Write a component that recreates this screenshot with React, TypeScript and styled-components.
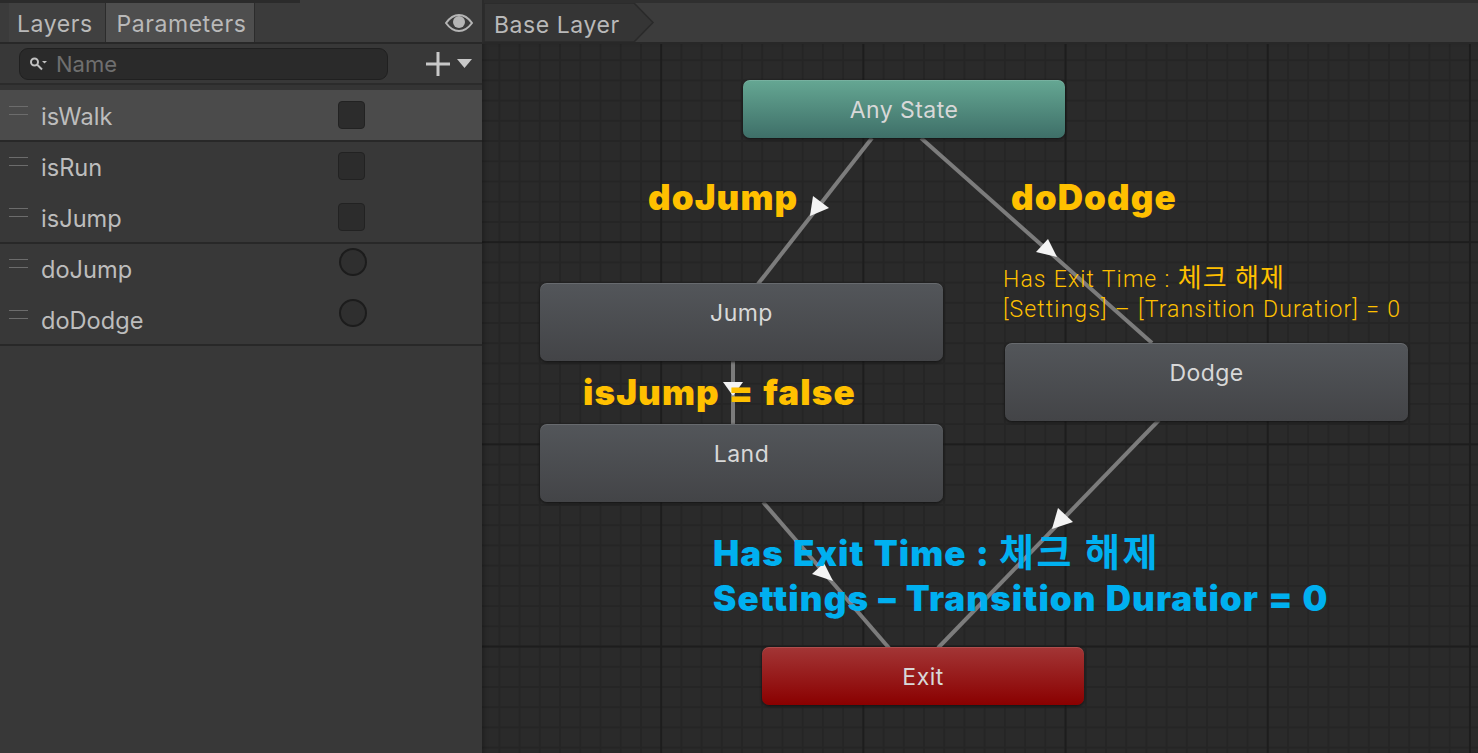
import React from 'react';
import styled, { createGlobalStyle } from 'styled-components';

const GlobalStyle = createGlobalStyle`
  html, body {
    margin: 0;
    padding: 0;
    background: #383838;
  }
  * {
    box-sizing: border-box;
  }
`;

const Window = styled.div`
  width: 1478px;
  height: 753px;
  display: flex;
  overflow: hidden;
  font-family: Inter, "Noto Sans", sans-serif;
`;

const Sidebar = styled.aside`
  width: 482px;
  flex-shrink: 0;
  background: #383838;
  display: flex;
  flex-direction: column;
`;

const TabBar = styled.div`
  height: 44px;
  display: flex;
  align-items: flex-end;
  padding-left: 9px;
  padding-right: 9px;
  border-bottom: 2px solid #282828;
  background: linear-gradient(#2b2b2b, #2b2b2b) no-repeat 0 0 / 300px 3px, #3b3b3b;
`;

const Tab = styled.div<{ $active?: boolean }>`
  height: 39px;
  padding: 3px ${(p) => (p.$active ? 8 : 12)}px 0 ${(p) => (p.$active ? 11 : 8)}px;
  display: flex;
  align-items: center;
  font-size: 23px;
  letter-spacing: 0.55px;
  color: #b9b9b9;
  background: ${(p) => (p.$active ? '#4e4e4e' : '#404040')};
  border-right: 1px solid #2c2c2c;
`;

const EyeButton = styled.div`
  margin-left: auto;
  align-self: center;
  display: flex;
  padding-top: 3px;
`;

const SearchRow = styled.div`
  height: 41px;
  display: flex;
  align-items: center;
  padding: 0 10px 0 19px;
  border-bottom: 2px solid #2b2b2b;
`;

const SearchBox = styled.div`
  width: 369px;
  height: 32px;
  border-radius: 9px;
  background: #2a2a2a;
  border: 1px solid #202020;
  display: flex;
  align-items: center;
  padding-left: 9px;
  gap: 8px;
  font-size: 22px;
  color: #6f6f6f;
`;

const AddButton = styled.div`
  margin-left: auto;
  display: flex;
  align-items: center;
  gap: 6px;
`;

const ParamList = styled.div`
  display: flex;
  flex-direction: column;
  padding-top: 5px;
  background: linear-gradient(#343434, #343434) no-repeat 0 0 / 100% 5px;
`;

const ParamRow = styled.div<{ $selected?: boolean; $divider?: boolean }>`
  height: ${(p) => (p.$selected ? 52 : 51)}px;
  display: flex;
  padding: ${(p) => (p.$selected ? 14 : 13)}px 0 0 9px;
  background: ${(p) => (p.$selected ? '#4b4b4b' : 'transparent')};
  border-bottom: ${(p) => (p.$divider ? '2px solid #282828' : 'none')};
`;

const Grip = styled.div`
  width: 19px;
  height: 9px;
  margin-top: 2px;
  border-top: 1px solid #6c6c6c;
  border-bottom: 1px solid #6c6c6c;
`;

const ParamName = styled.span`
  margin-left: 13px;
  width: 297px;
  font-size: 23.6px;
  line-height: 26px;
  color: #bdbdbd;
`;

const BoolBox = styled.div`
  width: 27px;
  height: 28px;
  margin-top: -3px;
  border-radius: 4px;
  background: #2c2c2c;
  border: 1px solid #222;
`;

const TriggerDot = styled.div`
  width: 28px;
  height: 28px;
  margin: -9px 0 0 1px;
  border-radius: 50%;
  background: #2f2f2f;
  border: 2px solid #1c1c1c;
`;

const Main = styled.main`
  flex: 1;
  display: flex;
  flex-direction: column;
`;

const Breadcrumb = styled.div`
  height: 44px;
  padding-top: 3px;
  background: linear-gradient(#2f2f2f, #2f2f2f) no-repeat 0 0 / 100% 3px, #3c3c3c;
  border-bottom: 2px solid #282828;
  border-left: 2px solid #2b2b2b;
  display: flex;
`;

const Crumb = styled.svg`
  width: 174px;
  height: 39px;
`;

const CrumbLabel = styled.text`
  font-family: Inter, sans-serif;
  font-size: 23px;
  letter-spacing: 0.55px;
  fill: #b9b9b9;
`;

const Canvas = styled.div`
  flex: 1;
  position: relative;
  background-color: #2a2a2a;
  background-image:
    linear-gradient(#1d1d1d 2px, transparent 2px),
    linear-gradient(90deg, #1d1d1d 2px, transparent 2px),
    linear-gradient(#252525 2px, transparent 2px),
    linear-gradient(90deg, #252525 2px, transparent 2px);
  background-size: 202.2px 202.2px, 202.2px 202.2px, 20.22px 20.22px, 20.22px 20.22px;
  background-position: 0 -5px, -24px 0, 0 -5px, -24px 0;
  box-shadow: inset 4px 0 4px -2px rgba(0, 0, 0, 0.25);
`;

const Wires = styled.svg`
  position: absolute;
  left: -482px;
  top: -44px;
  width: 1478px;
  height: 753px;
`;

const stateFills = {
  any: 'linear-gradient(#65a793, #3e6f68)',
  plain: 'linear-gradient(#53565a, #434447)',
  exit: 'linear-gradient(#a33636, #8a0000)',
};

const StateNode = styled.div<{ $kind: keyof typeof stateFills; $x: number; $y: number; $w: number; $h: number }>`
  position: absolute;
  left: ${(p) => p.$x - 482}px;
  top: ${(p) => p.$y - 44}px;
  width: ${(p) => p.$w}px;
  height: ${(p) => p.$h}px;
  border-radius: 7px;
  background: ${(p) => stateFills[p.$kind]};
  box-shadow: 0 1px 3px #111, inset 0 1px 0 rgba(255, 255, 255, 0.12);
  color: #d8d8d8;
  font-size: 23px;
  letter-spacing: 0.45px;
  text-align: center;
  padding-top: 16px;
  line-height: 28px;
`;

const Callout = styled.div<{ $x: number; $y: number; $color: string; $line: number }>`
  position: absolute;
  left: ${(p) => p.$x - 482}px;
  top: ${(p) => p.$y - 44}px;
  color: ${(p) => p.$color};
  line-height: ${(p) => p.$line}px;
  white-space: pre;
`;

// fixed height, so a tall Hangul run cannot push the next line down
const CalloutLine = styled.div<{ $height: number }>`
  height: ${(p) => p.$height}px;
`;

const HeavyText = styled.span`
  font-family: Inter, sans-serif;
  font-size: 35px;
  font-weight: 900;
  letter-spacing: 1.1px;
  word-spacing: 1px;
`;

const ThinText = styled.span`
  font-family: Roboto, sans-serif;
  font-size: 23px;
  font-weight: 300;
  letter-spacing: 1.1px;
  word-spacing: 0.5px;
`;

const Hangul = styled.span<{ $size: number; $weight: number; $track: number }>`
  font-family: "Noto Sans CJK KR", sans-serif;
  font-size: ${(p) => p.$size}px;
  font-weight: ${(p) => p.$weight};
  letter-spacing: ${(p) => p.$track}px;
  line-height: 0;
`;

const wires = [
  [872, 138, 758, 284],
  [921, 138, 1152, 343],
  [733, 361, 733, 424],
  [1159, 420, 938, 648],
  [763, 502, 889, 648],
];

const arrows = [
  '810,216 829,208 813,196',
  '1036,252 1057,257 1048,239',
  '723,382 743,382 733,396',
  '1058,508 1073,522 1052,529',
  '824,563 833,581 812,574',
];

function App() {
  return (
    <>
      <GlobalStyle />
      <Window>
        <Sidebar>
          <TabBar>
            <Tab>Layers</Tab>
            <Tab $active>Parameters</Tab>
            <EyeButton>
              <svg width="28" height="18" viewBox="0 0 28 18">
                <path d="M1 9 C6 2 10 1 14 1 C18 1 22 2 27 9 C22 16 18 17 14 17 C10 17 6 16 1 9 Z" fill="none" stroke="#b5b5b5" strokeWidth="2" />
                <circle cx="14" cy="8" r="6" fill="#b5b5b5" />
              </svg>
            </EyeButton>
          </TabBar>
          <SearchRow>
            <SearchBox>
              <svg width="19" height="16" viewBox="0 0 19 16">
                <circle cx="5.5" cy="6" r="3.5" fill="none" stroke="#c0c0c0" strokeWidth="2" />
                <path d="M8 8.5 L13 13.5" stroke="#c0c0c0" strokeWidth="2" />
                <path d="M13 5 H18 L15.5 7.5 Z" fill="#c0c0c0" />
              </svg>
              Name
            </SearchBox>
            <AddButton>
              <svg width="26" height="26" viewBox="0 0 26 26">
                <path d="M13 1 V25 M1 13 H25" stroke="#c8c8c8" strokeWidth="3" />
              </svg>
              <svg width="15" height="9" viewBox="0 0 15 9">
                <path d="M0 0 H15 L7.5 9 Z" fill="#c8c8c8" />
              </svg>
            </AddButton>
          </SearchRow>
          <ParamList>
            <ParamRow $selected $divider>
              <Grip />
              <ParamName>isWalk</ParamName>
              <BoolBox />
            </ParamRow>
            <ParamRow>
              <Grip />
              <ParamName>isRun</ParamName>
              <BoolBox />
            </ParamRow>
            <ParamRow $divider>
              <Grip />
              <ParamName>isJump</ParamName>
              <BoolBox />
            </ParamRow>
            <ParamRow>
              <Grip />
              <ParamName>doJump</ParamName>
              <TriggerDot />
            </ParamRow>
            <ParamRow $divider>
              <Grip />
              <ParamName>doDodge</ParamName>
              <TriggerDot />
            </ParamRow>
          </ParamList>
        </Sidebar>
        <Main>
          <Breadcrumb>
            <Crumb viewBox="0 0 174 39">
              <path d="M0 0 H150 L169 19.5 L150 39 H0 Z" fill="#353535" stroke="#2a2a2a" strokeWidth="1.5" />
              <CrumbLabel x="10" y="30">Base Layer</CrumbLabel>
            </Crumb>
          </Breadcrumb>
          <Canvas>
            <Wires viewBox="0 0 1478 753">
              {wires.map(([x1, y1, x2, y2]) => (
                <line key={`${x1}-${y1}`} x1={x1} y1={y1} x2={x2} y2={y2} stroke="#7c7c7c" strokeWidth="4" />
              ))}
              {arrows.map((points) => (
                <polygon key={points} points={points} fill="#f4f4f4" />
              ))}
            </Wires>
            <StateNode $kind="any" $x={743} $y={80} $w={322} $h={58}>Any State</StateNode>
            <StateNode $kind="plain" $x={540} $y={283} $w={403} $h={78}>Jump</StateNode>
            <StateNode $kind="plain" $x={540} $y={424} $w={403} $h={78}>Land</StateNode>
            <StateNode $kind="plain" $x={1005} $y={343} $w={403} $h={78}>Dodge</StateNode>
            <StateNode $kind="exit" $x={762} $y={647} $w={322} $h={58}>Exit</StateNode>
            <Callout $x={648} $y={175} $color="#ffc000" $line={44}><HeavyText>doJump</HeavyText></Callout>
            <Callout $x={1011} $y={175} $color="#ffc000" $line={44}><HeavyText>doDodge</HeavyText></Callout>
            <Callout $x={583} $y={370} $color="#ffc000" $line={44}><HeavyText>isJump = false</HeavyText></Callout>
            <Callout $x={1003} $y={265} $color="#ffc000" $line={30}>
              <CalloutLine $height={30}>
                <ThinText>Has Exit Time : </ThinText><Hangul $size={26} $weight={400} $track={1.2}>체크 해제</Hangul>
              </CalloutLine>
              <CalloutLine $height={30}>
                <ThinText>[Settings] – [Transition Duratior] = 0</ThinText>
              </CalloutLine>
            </Callout>
            <Callout $x={713} $y={531} $color="#00b0f0" $line={45}>
              <CalloutLine $height={45}>
                <HeavyText>Has Exit Time : </HeavyText><Hangul $size={38} $weight={700} $track={2.5}>체크 해제</Hangul>
              </CalloutLine>
              <CalloutLine $height={45}>
                <HeavyText>Settings – Transition Duratior = 0</HeavyText>
              </CalloutLine>
            </Callout>
          </Canvas>
        </Main>
      </Window>
    </>
  );
}

export default App;
